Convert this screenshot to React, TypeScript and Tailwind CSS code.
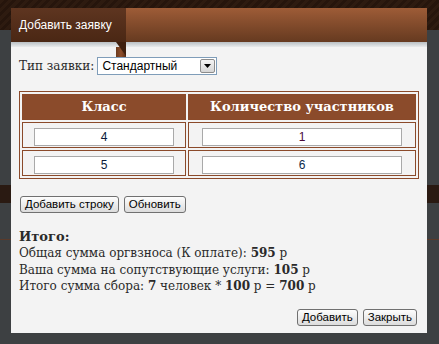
const serif = "font-['DejaVu_Serif',Georgia,serif]";
const sans = "font-['Liberation_Sans',Arial,sans-serif]";

function Btn({ label }: { label: string }) {
  return (
    <button
      type="button"
      className={`${sans} h-[17px] rounded-[3px] border border-[#707070] bg-gradient-to-b from-[#fdfdfd] to-[#dcdcdc] px-[4px] text-[11.5px] leading-[15px] text-black`}
    >
      {label}
    </button>
  );
}

function NumInput({ value, width, color }: { value: string; width: string; color: string }) {
  return (
    <input
      readOnly
      value={value}
      className={`${sans} ${width} ${color} h-[18px] border border-[#a9a9a9] bg-white text-center text-[12px] outline-none`}
    />
  );
}

const rows = [
  { cls: "4", count: "1", countColor: "text-[#4a0a3a]" },
  { cls: "5", count: "6", countColor: "text-[#0a2a4a]" },
];

export default function App() {
  return (
    <div className="relative h-[344px] w-[439px] overflow-hidden bg-[#3d4042]">
      {/* page behind the overlay */}
      <div className="h-[30px] bg-[repeating-linear-gradient(135deg,#2e1b10_0px,#2e1b10_3px,#26150c_3px,#26150c_6px)]" />
      <div className="mt-[155px] h-[18px] bg-[#2a1a12]" />
      <div className="mt-[36px] h-px bg-[#5a3a2a]" />

      {/* dialog */}
      <div className="absolute left-[11px] top-[8px] flex h-[325px] w-[416px] flex-col bg-[#f3f3f3]">
        <div className="flex h-[34px]">
          <div
            className={`${sans} flex w-[115px] items-center bg-gradient-to-b from-[#5e3520] to-[#4a2714] pl-[8px] text-[12px] text-white`}
          >
            Добавить заявку
          </div>
          <div className="flex-1 bg-gradient-to-b from-[#9e5c37] to-[#663a20]" />
        </div>
        <div className="h-[5px] bg-gradient-to-b from-[#b9bfc3] to-[#e9ebec]" />

        {/* ribbon fold under the tab */}
        <div className="absolute left-[105px] top-[39px] h-[28px] w-[10px] bg-gradient-to-r from-[#6b3a1e] via-[#8e4e2a] to-[#5a2f17]" />
        <div className="absolute left-[105px] top-[34px] h-[14px] w-[10px] bg-[#3f200f] [clip-path:polygon(0_0,100%_0,100%_100%)]" />

        <div className="flex flex-1 flex-col px-[8px]">
          <div className="relative mt-[10px] flex h-[18px] items-center gap-[3px]">
            <span className={`${serif} text-[12px] text-[#2a2a2a]`}>Тип заявки:</span>
            <div className="flex h-[18px] w-[120px] items-center border border-[#7f9db9] bg-white">
              <span className={`${sans} flex-1 pl-[4px] text-[12px] text-black`}>Стандартный</span>
              <span className="m-px flex h-[14px] w-[15px] items-center justify-center rounded-[2px] border border-[#8c8c8c] bg-gradient-to-b from-[#f4f4f4] to-[#d6d6d6]">
                <svg width="7" height="4" viewBox="0 0 7 4">
                  <path d="M0 0h7L3.5 4z" fill="#000" />
                </svg>
              </span>
            </div>
          </div>

          <table className="mt-[16px] w-[400px] border-separate border-spacing-[2px] border border-[#8b4a2a]">
            <thead>
              <tr>
                <th
                  className={`${serif} h-[26px] w-[164px] border border-[#8b4a2a] bg-[#8b4b2b] text-[13px] font-bold text-white`}
                >
                  Класс
                </th>
                <th
                  className={`${serif} h-[26px] border border-[#8b4a2a] bg-[#8b4b2b] text-[13px] font-bold text-white`}
                >
                  Количество участников
                </th>
              </tr>
            </thead>
            <tbody>
              {rows.map((r) => (
                <tr key={r.cls}>
                  <td className="h-[26px] border border-[#8b4a2a] text-center align-middle">
                    <NumInput value={r.cls} width="w-[140px]" color="text-[#0a1a3a]" />
                  </td>
                  <td className="h-[26px] border border-[#8b4a2a] text-center align-middle">
                    <NumInput value={r.count} width="w-[200px]" color={r.countColor} />
                  </td>
                </tr>
              ))}
            </tbody>
          </table>

          <div className="mt-[17px] flex gap-[5px] pl-px">
            <Btn label="Добавить строку" />
            <Btn label="Обновить" />
          </div>

          <div className={`${serif} mt-[16px] text-[12px] leading-[16.5px] text-[#2a2a2a]`}>
            <div className="text-[13px] font-bold leading-[16px]">Итого:</div>
            <div>
              Общая сумма оргвзноса (К оплате): <b>595</b> р
            </div>
            <div>
              Ваша сумма на сопутствующие услуги: <b>105</b> р
            </div>
            <div>
              Итого сумма сбора: <b>7</b> человек * <b>100</b> р = <b>700</b> р
            </div>
          </div>

          <div className="mt-auto mb-[7px] flex justify-end gap-[5px] pr-[2px]">
            <Btn label="Добавить" />
            <Btn label="Закрыть" />
          </div>
        </div>
      </div>
    </div>
  );
}
